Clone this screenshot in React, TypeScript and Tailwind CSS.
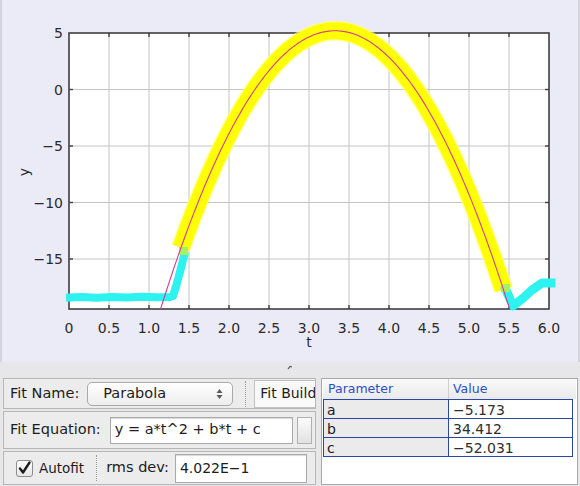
import React from "react";

const X = (t: number) => 67 + 80 * t;
const Y = (v: number) => 33 + (5 - v) * 11.3;
const f = (t: number) => -5.173 * t * t + 34.412 * t - 52.031;

function curve(a: number, b: number, n: number) {
  const out: string[] = [];
  for (let i = 0; i <= n; i++) {
    const t = a + ((b - a) * i) / n;
    out.push(`${X(t).toFixed(2)},${Y(f(t)).toFixed(2)}`);
  }
  return out.join(" ");
}

const xTicks = [0, 0.5, 1, 1.5, 2, 2.5, 3, 3.5, 4, 4.5, 5, 5.5, 6];
const xLabels = ["0", "0.5", "1.0", "1.5", "2.0", "2.5", "3.0", "3.5", "4.0", "4.5", "5.0", "5.5", "6.0"];
const yTicks = [5, 0, -5, -10, -15];
const yLabels = ["5", "0", "−5", "−10", "−15"];

function Chart() {
  const L = 67, T = 33, R = 547, B = 309;
  return (
    <svg width="580" height="362" viewBox="0 0 580 362" className="block">
      <defs>
        <clipPath id="plotclip">
          <rect x={L} y={T - 10} width={R - L} height={B - T + 10} />
        </clipPath>
      </defs>
      <rect x={L} y={T} width={R - L} height={B - T} fill="#ffffff" />
      {xTicks.slice(1, -1).map((t) => (
        <line key={"gx" + t} x1={X(t)} x2={X(t)} y1={T} y2={B} stroke="#c4c4c4" strokeWidth="1" />
      ))}
      {yTicks.slice(1).map((v) => (
        <line key={"gy" + v} x1={L} x2={R} y1={Y(v)} y2={Y(v)} stroke="#c4c4c4" strokeWidth="1" />
      ))}
      <rect x={L} y={T} width={R - L} height={B - T} fill="none" stroke="#3f3f3f" strokeWidth="1.6" />
      {xTicks.slice(1, -1).map((t) => (
        <g key={"tx" + t}>
          <line x1={X(t)} x2={X(t)} y1={T} y2={T + 4} stroke="#3f3f3f" strokeWidth="1.4" />
          <line x1={X(t)} x2={X(t)} y1={B} y2={B - 4} stroke="#3f3f3f" strokeWidth="1.4" />
        </g>
      ))}
      {yTicks.slice(1).map((v) => (
        <g key={"ty" + v}>
          <line x1={L} x2={L + 4} y1={Y(v)} y2={Y(v)} stroke="#3f3f3f" strokeWidth="1.4" />
          <line x1={R} x2={R - 4} y1={Y(v)} y2={Y(v)} stroke="#3f3f3f" strokeWidth="1.4" />
        </g>
      ))}
      {/* data */}
      <polyline points={curve(1.4, 5.43, 120)} fill="none" stroke="#ffff70" strokeOpacity="0.7" strokeWidth="20" strokeLinejoin="round" />
      <polyline points={curve(1.4, 5.43, 120)} fill="none" stroke="#ffff00" strokeWidth="17" strokeLinejoin="round" />
      <polyline
        points="68,297.5 80,297 95,297.8 110,297 125,297.4 140,296.8 155,297.3 168,297 171,296 175,283 179,268 182,256"
        fill="none" stroke="#2ef2f0" strokeWidth="8" strokeLinejoin="round" strokeLinecap="square"
      />
      <polyline
        points="504,290 511,306 520,299 530,290 540,283 549,283"
        fill="none" stroke="#2ef2f0" strokeWidth="9" strokeLinejoin="round" strokeLinecap="square"
      />
      <rect x="177" y="247" width="9" height="8" fill="#a8f060" />
      <rect x="499" y="284" width="9" height="8" fill="#a8f060" />
      <polyline points={curve(1.1446, 5.508, 160)} fill="none" stroke="#d23a9a" strokeWidth="1.1" clipPath="url(#plotclip)" />
      {/* labels */}
      <g fontFamily="'DejaVu Sans', sans-serif" fontSize="14" fill="#2a2a2a">
        {yTicks.map((v, i) => (
          <text key={"ly" + v} x={61} y={Y(v) + 5} textAnchor="end">{yLabels[i]}</text>
        ))}
        {xTicks.map((t, i) => (
          <text key={"lx" + t} x={X(t)} y={333} textAnchor="middle">{xLabels[i]}</text>
        ))}
        <text x={307} y={347} textAnchor="middle">t</text>
        <text x={27} y={172} textAnchor="middle" transform="rotate(-90 27 172)">y</text>
      </g>
    </svg>
  );
}

function Sep() {
  return <div className="h-[26px] border-l border-dotted border-[#9a9a9a]" />;
}

export default function App() {
  return (
    <div className="w-[580px] h-[486px] overflow-hidden flex flex-col bg-[#e7e7e9] font-['DejaVu_Sans',sans-serif] text-[#1c1c1c]">
      <div className="h-[362px] bg-[#ebebf8] border-l-2 border-r-2 border-[#d4d4de]">
        <Chart />
      </div>
      <div className="relative flex-1 pt-[16px] flex">
        <svg className="absolute left-[287px] top-[3px]" width="6" height="5" viewBox="0 0 6 5">
          <path d="M1 4 L3 1.5 L5 2" fill="none" stroke="#555" strokeWidth="1.2" />
        </svg>
        <div className="ml-[3px] w-[313px] flex flex-col gap-[2px]">
          <div className="h-[31px] border border-[#b7b7b7] bg-[#ececec] flex items-center overflow-hidden text-[14.5px]">
            <span className="ml-[6px] whitespace-nowrap">Fit Name:</span>
            <div className="ml-[8px] w-[146px] h-[24px] shrink-0 rounded-[5px] border border-[#a9a9a9] bg-gradient-to-b from-[#ffffff] to-[#ededed] flex items-center justify-between">
              <span className="ml-[15px]">Parabola</span>
              <svg className="mr-[9px]" width="7" height="12" viewBox="0 0 7 12">
                <polygon points="0.5,5 3.5,1 6.5,5" fill="#5a5a5a" />
                <polygon points="0.5,7 3.5,11 6.5,7" fill="#5a5a5a" />
              </svg>
            </div>
            <div className="ml-[12px] shrink-0"><Sep /></div>
            <div className="ml-[8px] h-[28px] shrink-0 w-[80px] border border-[#c2c2c2] bg-[#f9f9f9] flex items-center">
              <span className="ml-[5px] text-[14px] whitespace-nowrap">Fit Builder</span>
            </div>
          </div>
          <div className="h-[38px] border border-[#b7b7b7] bg-[#ececec] flex items-center overflow-hidden text-[14.5px]">
            <span className="ml-[6px] whitespace-nowrap">Fit Equation:</span>
            <div className="ml-[9px] w-[183px] h-[27px] shrink-0 border border-[#a9a9a9] bg-white shadow-[inset_0_1px_1px_rgba(0,0,0,0.15)] flex items-center">
              <span className="ml-[4px] whitespace-nowrap">y = a*t^2 + b*t + c</span>
            </div>
            <div className="ml-[4px] w-[15px] h-[27px] shrink-0 border border-[#b0b0b0] bg-gradient-to-b from-[#fbfbfb] to-[#e2e2e2]" />
          </div>
          <div className="h-[34px] border border-[#b7b7b7] bg-[#ececec] flex items-center overflow-hidden text-[14.5px]">
            <div className="ml-[12px] w-[17px] h-[17px] shrink-0 rounded-[3px] border border-[#8e8e8e] bg-gradient-to-b from-white to-[#e6e6e6] flex items-center justify-center">
              <svg width="15" height="15" viewBox="0 0 15 15">
                <path d="M3 7.5 L6 11.5 L12.5 1.5" fill="none" stroke="#1e1e1e" strokeWidth="2.4" strokeLinecap="round" strokeLinejoin="round" />
              </svg>
            </div>
            <span className="ml-[6px] text-[13.5px]">Autofit</span>
            <div className="ml-[12px] shrink-0"><Sep /></div>
            <span className="ml-[9px] whitespace-nowrap">rms dev:</span>
            <div className="ml-[6px] w-[132px] h-[29px] shrink-0 border border-[#a9a9a9] bg-white shadow-[inset_0_1px_1px_rgba(0,0,0,0.15)] flex items-center">
              <span className="ml-[4px] text-[14px]">4.022E−1</span>
            </div>
          </div>
        </div>
        <div className="ml-[5px] w-[257px] h-[107px] border border-[#a9a9a9] bg-white px-[1px]">
          <div className="h-[20px] flex bg-gradient-to-b from-[#fbfbfb] to-[#e9e9e9] text-[12.5px] text-[#2b4fc4]">
            <div className="w-[126px] border-r border-[#cfcfcf] flex items-center pl-[5px]">Parameter</div>
            <div className="flex-1 flex items-center pl-[4px]">Value</div>
          </div>
          <div className="mr-[3px] border-t border-l border-r border-[#2a47a8] text-[14px]">
            {[["a", "−5.173"], ["b", "34.412"], ["c", "−52.031"]].map(([p, v]) => (
              <div key={p} className="h-[19px] flex border-b border-[#2a47a8]">
                <div className="w-[124px] bg-[#ebebeb] flex items-end pl-[3px] leading-none pb-[1px]">{p}</div>
                <div className="flex-1 border-l border-[#2a47a8] flex items-end pl-[4px] leading-none pb-[1px] text-[#2e2e2e]">{v}</div>
              </div>
            ))}
          </div>
        </div>
      </div>
    </div>
  );
}
